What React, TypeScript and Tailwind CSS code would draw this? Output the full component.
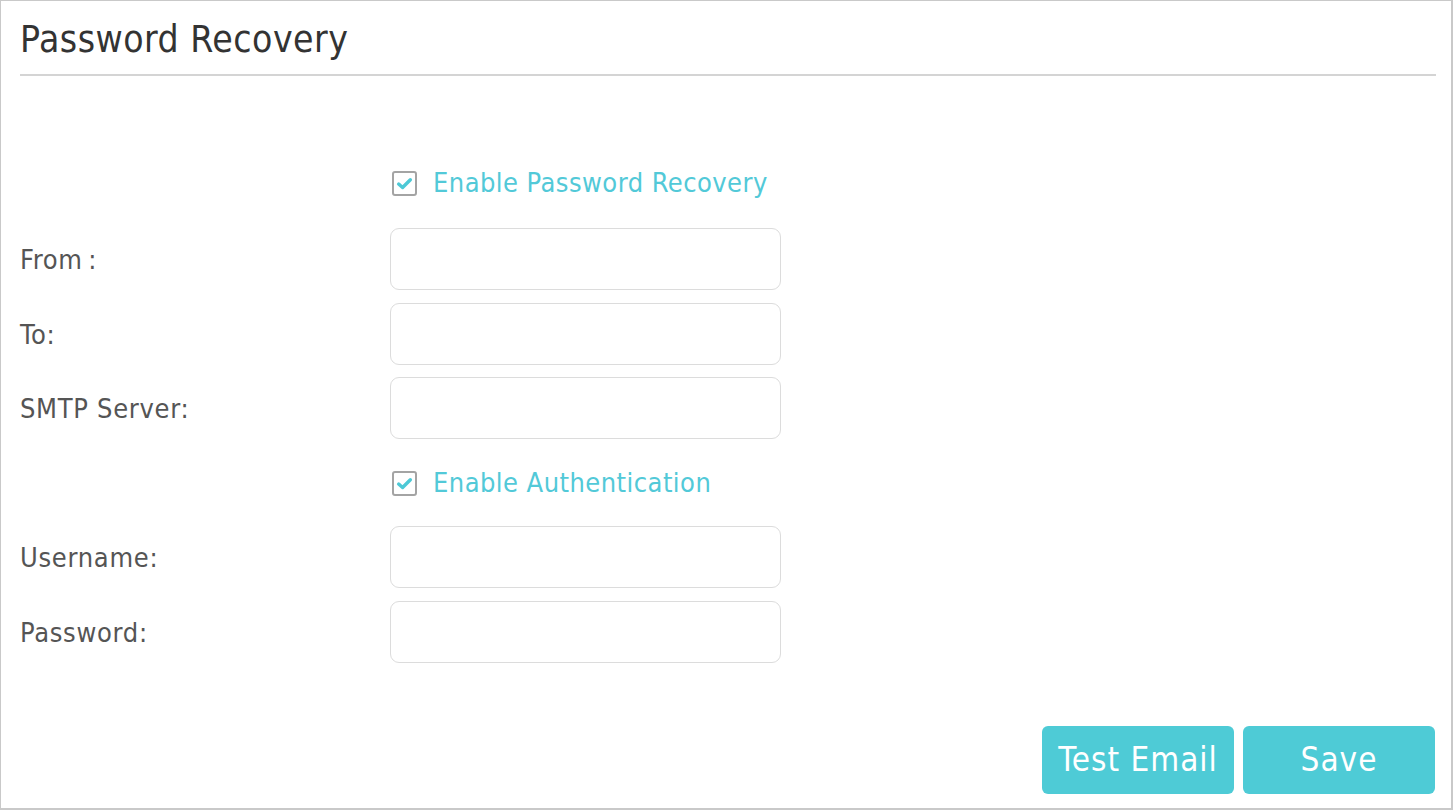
import React from "react";

const font = { fontFamily: '"DejaVu Sans Condensed", "DejaVu Sans", Verdana, sans-serif' };

function Check() {
  return (
    <span className="flex h-[25px] w-[25px] items-center justify-center rounded-[3px] border-2 border-[#a4a4a4] bg-white">
      <svg width="17" height="15" viewBox="0 0 16 14">
        <path d="M2.5 7.5 L6.2 10.8 L13.5 3.5" fill="none" stroke="#4dc9d6" strokeWidth="3.2" strokeLinecap="round" strokeLinejoin="round" />
      </svg>
    </span>
  );
}

function CheckRow({ label }: { label: string }) {
  return (
    <div className="flex h-[32px] items-center">
      <div className="w-[372px] shrink-0" />
      <Check />
      <span className="ml-[16px] text-[27px] leading-[32px] tracking-[0.45px] text-[#52c9d8]">{label}</span>
    </div>
  );
}

function Field({ label }: { label: string }) {
  return (
    <div className="flex h-[62px] items-center">
      <label className="w-[370px] shrink-0 pt-[2px] text-[27px] leading-[32px] tracking-[0.7px] text-[#555555]">{label}</label>
      <input className="h-[62px] w-[391px] rounded-[9px] border border-[#dcdcdc] bg-white outline-none" />
    </div>
  );
}

export default function App() {
  return (
    <div className="h-[811px] w-[1454px] bg-white" style={font}>
      <div className="flex h-[810px] w-[1453px] flex-col border-t border-l border-r-2 border-b-2 border-[#c9c9c9] pl-[19px] pr-[16px]">
        <h1 className="mt-[17px] text-[37px] font-normal leading-[43px] tracking-[0.5px] text-[#333333]">Password Recovery</h1>
        <div className="mt-[13px] h-[2px] w-[1416px] bg-[#d4d4d4]" />
        <div className="mt-[91px]">
          <CheckRow label="Enable Password Recovery" />
        </div>
        <div className="mt-[29px] flex flex-col gap-[12.5px]">
          <Field label={"From\u2009:"} />
          <Field label="To:" />
          <Field label="SMTP Server:" />
        </div>
        <div className="mt-[28px]">
          <CheckRow label="Enable Authentication" />
        </div>
        <div className="mt-[27px] flex flex-col gap-[12.5px]">
          <Field label="Username:" />
          <Field label="Password:" />
        </div>
        <div className="mt-[63px] flex justify-end gap-[9px]">
          <button className="h-[68px] w-[192px] rounded-[6px] bg-[#4ecbd6] text-[33px] tracking-[1px] text-white">Test Email</button>
          <button className="h-[68px] w-[192px] rounded-[6px] bg-[#4ecbd6] text-[33px] tracking-[1px] text-white">Save</button>
        </div>
      </div>
    </div>
  );
}
